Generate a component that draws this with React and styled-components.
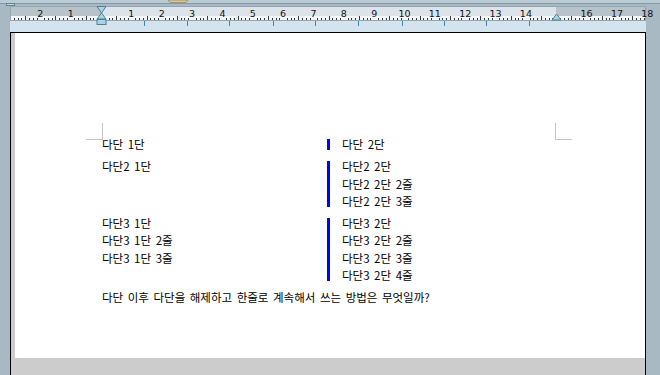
import React from 'react';
import styled, {createGlobalStyle} from 'styled-components';

const GlobalStyle = createGlobalStyle`
    html, body {
        margin: 0;
        padding: 0;
        background: #a9b9c3;
    }
`;

const ZERO = 91;
const CM = 30.35;
const TAB_STOPS = [134, 177, 219, 263, 305, 348, 392, 434, 476, 519];

const SECTIONS = [
    {left: ['다단 1단'], right: ['다단 2단']},
    {left: ['다단2 1단'], right: ['다단2 2단', '다단2 2단 2줄', '다단2 2단 3줄']},
    {left: ['다단3 1단', '다단3 1단 2줄', '다단3 1단 3줄'], right: ['다단3 2단', '다단3 2단 2줄', '다단3 2단 3줄', '다단3 2단 4줄']},
];

function RulerDrawing() {
    const ticks = [];
    const labels = [];
    for (let i = -24; i <= 144; i++) {
        const x = ZERO + (i * CM) / 8;
        if (x < 1) continue;
        if (i % 8 === 0) {
            const n = Math.abs(i / 8);
            if (n !== 0 && n !== 15) {
                labels.push(
                    <text key={'l' + i} x={x} y={11} textAnchor="middle" fontSize="9.5" fontFamily="'DejaVu Sans', sans-serif" fill="#111">{n}</text>
                );
            }
            continue;
        }
        if (x > 635) continue;
        const h = i % 4 === 0 ? 4 : 2;
        ticks.push(<rect key={'t' + i} x={Math.round(x)} y={14 - h} width="1" height={h} fill="#3a3a3a" />);
    }
    return (
        <svg width="636" height="26" viewBox="0 0 636 26">
            <rect x="0" y="0" width="636" height="15" fill="#b7c2c9" />
            <rect x={ZERO} y="0" width={546 - ZERO} height="15" fill="#dce4e9" />
            <rect x="0" y="10" width="636" height="5" fill="#f2f6f8" />
            <rect x="0.5" y="0.5" width="635" height="14" fill="none" stroke="#93a6b2" />
            <rect x="0" y="15" width="636" height="11" fill="#d4e4ef" />
            {ticks}
            {labels}
            {TAB_STOPS.map((x) => (
                <rect key={x} x={x} y="15" width="1" height="5" fill="#3b87ad" />
            ))}
            <path d="M87 0.5 H96 L91.5 7 Z" fill="#a8d4e4" stroke="#4d7f95" />
            <path d="M91.5 7 L96 13 H87 Z" fill="#a8d4e4" stroke="#4d7f95" />
            <rect x="87" y="13.5" width="9" height="5" fill="#a8d4e4" stroke="#4d7f95" />
            <path d="M546.5 8 L551 14 H542 Z" fill="#a8d4e4" stroke="#4d7f95" />
        </svg>
    );
}

function App() {
    return (
        <>
            <GlobalStyle />
            <Shell>
                <TopStrip>
                    <svg width="660" height="6" viewBox="0 0 660 6">
                        <rect x="0" y="0" width="660" height="4" fill="#bccad3" />
                        <rect x="0" y="3" width="660" height="1" fill="#7f9caf" />
                        <rect x="6.5" y="3.5" width="8" height="2" fill="#c8d6de" stroke="#5f8295" />
                        <path d="M168 0 H188 L186 2.5 H170 Z" fill="#d9c79a" stroke="#9c8a5c" strokeWidth="0.8" />
                    </svg>
                </TopStrip>
                <Workspace>
                    <RulerRow>
                        <RulerDrawing />
                    </RulerRow>
                    <DocFrame>
                        <Page>
                            <Body>
                                <Corner $side="left" />
                                <Corner $side="right" />
                                {SECTIONS.map((s, i) => (
                                    <Section key={i}>
                                        <Column>
                                            {s.left.map((t) => <Line key={t}>{t}</Line>)}
                                        </Column>
                                        <Bar />
                                        <Column $right>
                                            {s.right.map((t) => <Line key={t}>{t}</Line>)}
                                        </Column>
                                    </Section>
                                ))}
                                <Line>다단 이후 다단을 해제하고 한줄로 계속해서 쓰는 방법은 무엇일까?</Line>
                            </Body>
                        </Page>
                    </DocFrame>
                </Workspace>
            </Shell>
        </>
    );
}

export default App;

const Shell = styled.div`
    width: 660px;
    height: 375px;
    background: #a9b9c3;
    display: flex;
    flex-direction: column;
    overflow: hidden;
`;
const TopStrip = styled.div`
    height: 6px;
    svg {
        display: block;
    }
`;
const Workspace = styled.div`
    flex: 1;
    margin: 0 14px 0 10px;
    display: flex;
    flex-direction: column;
`;
const RulerRow = styled.div`
    height: 26px;
    svg {
        display: block;
        overflow: visible;
    }
`;
const DocFrame = styled.div`
    flex: 1;
    border: 1px solid #000;
    border-bottom: none;
    background: #cccccc;
    padding-left: 4px;
`;
const Page = styled.div`
    height: 325px;
    background: #fff;
    padding: 103px 0 0 87px;
    box-sizing: border-box;
`;
const Body = styled.div`
    position: relative;
    width: 454px;
    display: flex;
    flex-direction: column;
    gap: 5px;
    font-family: "Noto Sans CJK KR", "Noto Sans", sans-serif;
    font-size: 11.5px;
    line-height: 17.3px;
    word-spacing: 2px;
    color: #000;
`;
const Corner = styled.div`
    position: absolute;
    top: -13px;
    width: 16px;
    height: 16px;
    ${(p) => p.$side === 'left'
        ? `left: -16px; border-right: 1px solid #c4c4c4; border-bottom: 1px solid #c4c4c4;`
        : `right: -16px; border-left: 1px solid #c4c4c4; border-bottom: 1px solid #c4c4c4;`}
`;
const Section = styled.div`
    display: grid;
    grid-template-columns: 225px 3px 1fr;
`;
const Column = styled.div`
    padding-left: ${(p) => (p.$right ? '12px' : '0')};
`;
const Bar = styled.div`
    background: #0000ff;
    margin: 3px 0;
`;
const Line = styled.div`
    white-space: nowrap;
`;
